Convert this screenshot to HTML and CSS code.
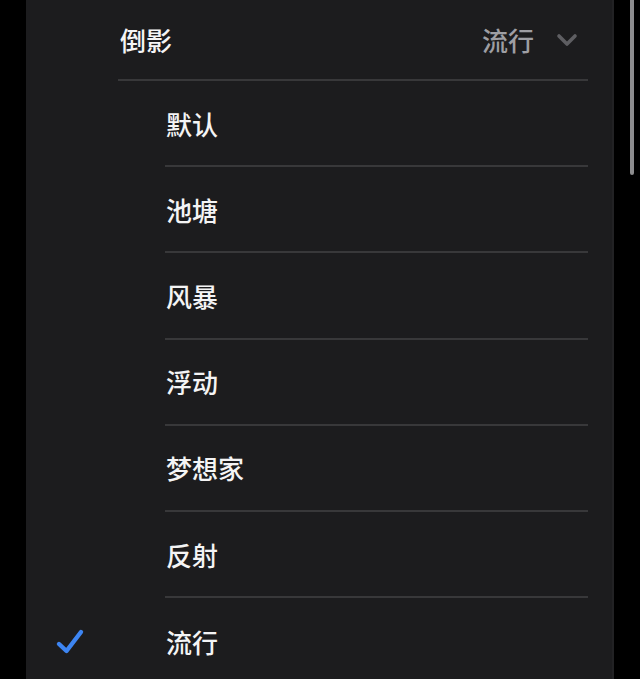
FILE: index.html
```html
<!DOCTYPE html>
<html lang="zh-CN">
<head>
<meta charset="utf-8">
<title>倒影</title>
<link rel="stylesheet" href="styles.css">
</head>
<body>
<div class="screen">
  <div class="gutter"></div>
  <div class="panel">
    <div class="header">
      <span class="header-title">倒影</span>
      <span class="header-value">流行</span>
      <svg class="chevron" width="22" height="14" viewBox="0 0 22 14"><path d="M3 3 L11 11 L19 3" fill="none" stroke="#5e5e62" stroke-width="3.6" stroke-linecap="round" stroke-linejoin="round"/></svg>
    </div>
    <div class="item"><div class="check-cell"></div><div class="label">默认</div></div>
    <div class="item"><div class="check-cell"></div><div class="label">池塘</div></div>
    <div class="item"><div class="check-cell"></div><div class="label">风暴</div></div>
    <div class="item"><div class="check-cell"></div><div class="label">浮动</div></div>
    <div class="item"><div class="check-cell"></div><div class="label">梦想家</div></div>
    <div class="item"><div class="check-cell"></div><div class="label">反射</div></div>
    <div class="item"><div class="check-cell"><svg class="check" width="32" height="30" viewBox="0 0 32 30"><path d="M5 18 L12.5 25 L27 6" fill="none" stroke="#3d85f2" stroke-width="4.4" stroke-linecap="round" stroke-linejoin="round"/></svg></div><div class="label last">流行</div></div>
  </div>
  <div class="rail"><div class="scrollbar"></div></div>
</div>
</body>
</html>
```
FILE: styles.css
```css
html, body {
  margin: 0;
  padding: 0;
  background: #000;
  height: 679px;
  overflow: hidden;
}
.screen {
  display: flex;
  height: 679px;
  font-family: "Noto Sans CJK SC", "Noto Sans", sans-serif;
  font-weight: 500;
  color: #f4f4f5;
}
.gutter {
  width: 26px;
  flex: none;
}
.panel {
  width: 586px;
  flex: none;
  background: #1c1c1e;
  border-right: 2px solid #222224;
  overflow: hidden;
}
.header {
  display: flex;
  align-items: center;
  height: 79px;
  margin-left: 92px;
  margin-right: 24px;
  border-bottom: 2px solid #38383a;
  font-size: 26px;
}
.header-title {
  padding-left: 2px;
  flex: 1;
}
.header-value {
  color: #9e9ea3;
}
.chevron {
  margin-left: 22px;
  margin-right: 10px;
  display: block;
}
.item {
  display: flex;
  height: 86.2px;
}
.check-cell {
  width: 139px;
  flex: none;
  display: flex;
  align-items: center;
  padding-left: 28px;
  box-sizing: border-box;
}
.check {
  display: block;
}
.label {
  flex: 1;
  margin-right: 24px;
  display: flex;
  align-items: center;
  padding-left: 1px;
  font-size: 26px;
  border-bottom: 2px solid #38383a;
}
.label.last {
  border-bottom: none;
}
.rail {
  flex: 1;
  padding-left: 16px;
}
.scrollbar {
  width: 4px;
  height: 175px;
  background: #8c8c8e;
  border-radius: 0 0 2px 2px;
}
```
